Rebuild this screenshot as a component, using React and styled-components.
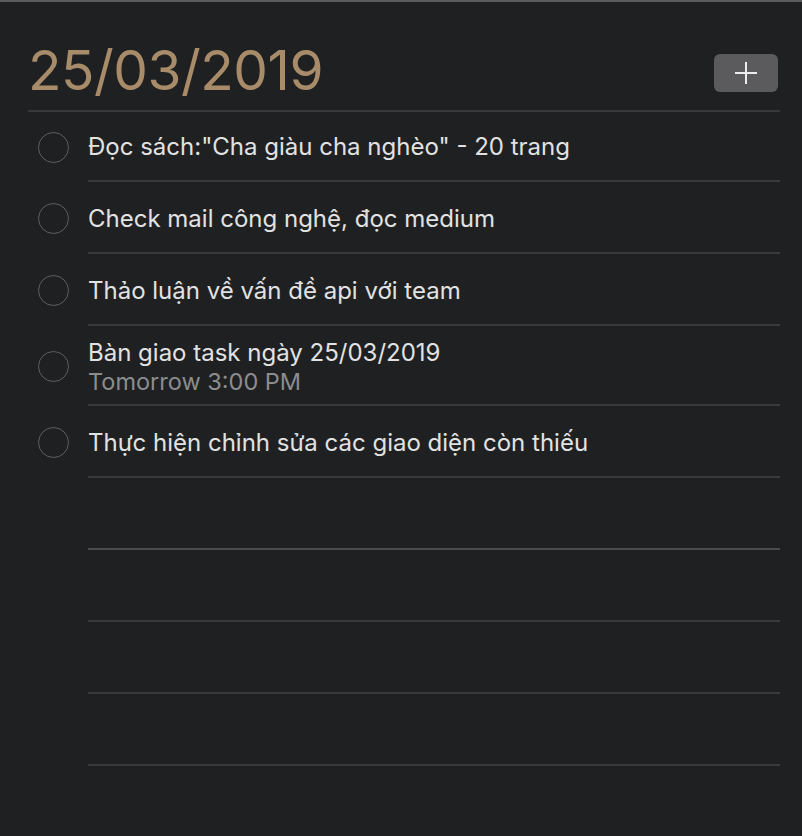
import React from 'react';
import styled, { createGlobalStyle } from 'styled-components';

const tasks = [
  { title: 'Đọc sách:"Cha giàu cha nghèo" - 20 trang' },
  { title: 'Check mail công nghệ, đọc medium' },
  { title: 'Thảo luận về vấn đề api với team' },
  { title: 'Bàn giao task ngày 25/03/2019', note: 'Tomorrow 3:00 PM' },
  { title: 'Thực hiện chỉnh sửa các giao diện còn thiếu' },
];

const emptyRows = [0, 1, 2, 3];

const App = () => {
  return (
    <>
      <GlobalStyle />
      <Window>
        <Header>
          <DateTitle>25/03/2019</DateTitle>
          <AddButton aria-label="Add task">
            <svg width="24" height="24" viewBox="0 0 24 24">
              <path d="M12 1v22M1 12h22" stroke="#ececec" strokeWidth="2" />
            </svg>
          </AddButton>
        </Header>
        <List>
          {tasks.map((t, i) => (
            <Row key={i}>
              <CheckCell>
                <Circle />
              </CheckCell>
              <Content tall={!!t.note}>
                <Title>{t.title}</Title>
                {t.note && <Note>{t.note}</Note>}
              </Content>
            </Row>
          ))}
          {emptyRows.map((i) => (
            <Row key={'e' + i}>
              <CheckCell />
              <Content light={i === 0} />
            </Row>
          ))}
        </List>
      </Window>
    </>
  );
};

export default App;

const GlobalStyle = createGlobalStyle`
  html, body {
    margin: 0;
    padding: 0;
    background: #1f2022;
  }
  body {
    font-family: Inter, "Noto Sans", sans-serif;
  }
`;

const Window = styled.div`
  width: 802px;
  height: 836px;
  box-sizing: border-box;
  background: #1f2022;
  border-top: 2px solid #5c5c5e;
  padding: 0 22px 0 28px;
  overflow: hidden;
`;

const Header = styled.div`
  display: flex;
  align-items: flex-end;
  justify-content: space-between;
  height: 110px;
  box-sizing: border-box;
  border-bottom: 2px solid #38393b;
  padding-bottom: 12px;
`;

const DateTitle = styled.div`
  color: #a88b68;
  font-size: 55px;
  line-height: 55px;
  font-weight: 400;
  letter-spacing: -0.5px;
`;

const AddButton = styled.button`
  width: 64px;
  height: 38px;
  border: none;
  border-radius: 6px;
  background: #5b5b5d;
  display: flex;
  align-items: center;
  justify-content: center;
  padding: 0;
  margin: 0 2px 6px 0;
  cursor: pointer;
`;

const List = styled.div`
  display: flex;
  flex-direction: column;
`;

const Content = styled.div`
  flex: 1;
  height: ${(p) => (p.tall ? '80px' : '72px')};
  box-sizing: border-box;
  border-bottom: 2px solid ${(p) => (p.light ? '#4a4b4d' : '#38393b')};
  display: flex;
  flex-direction: column;
  justify-content: center;
  padding-top: 4px;
`;

const Row = styled.div`
  display: flex;

  &:first-child ${Content} {
    height: 70px;
    padding-top: 2px;
  }
`;

const CheckCell = styled.div`
  width: 60px;
  display: flex;
  align-items: center;
  padding-left: 10px;
  box-sizing: border-box;
`;

const Circle = styled.div`
  width: 31px;
  height: 31px;
  box-sizing: border-box;
  border: 1.5px solid #5e5e60;
  border-radius: 50%;
`;

const Title = styled.div`
  color: #e2e2e2;
  font-size: 24px;
  line-height: 30px;
`;

const Note = styled.div`
  color: #8c8c8e;
  font-size: 23.5px;
  line-height: 28px;
`;
